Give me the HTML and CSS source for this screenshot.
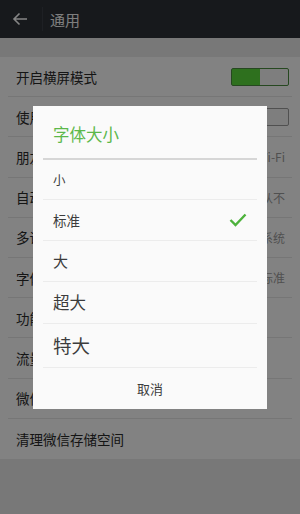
FILE: index.html
```html
<!DOCTYPE html>
<html lang="zh-CN">
<head>
    <meta charset="UTF-8">
    <meta name="viewport" content="width=device-width, initial-scale=1.0">
    <title>通用</title>
    <link rel="stylesheet" href="styles.css">
</head>
<body>
    <header class="topbar">
        <svg class="back" width="16" height="14" viewBox="0 0 16 14">
            <path d="M15 7H2M7.5 1.5L2 7l5.5 5.5" fill="none" stroke="#fff" stroke-width="1.6"/>
        </svg>
        <span class="sep"></span>
        <span class="title">通用</span>
    </header>

    <ul class="settings">
        <li class="row"><span>开启横屏模式</span><span class="switch on"></span></li>
        <li class="row"><span>使用听筒播放语音</span><span class="switch"></span></li>
        <li class="row"><span>朋友圈小视频自动下载</span><span class="value">仅Wi-Fi</span></li>
        <li class="row"><span>自动下载微信安装包</span><span class="value">从不</span></li>
        <li class="row"><span>多语言</span><span class="value">跟随系统</span></li>
        <li class="row"><span>字体大小</span><span class="value">标准</span></li>
        <li class="row"><span>功能</span></li>
        <li class="row"><span>流量统计</span></li>
        <li class="row"><span>微信运动</span></li>
        <li class="row"><span>清理微信存储空间</span></li>
    </ul>

    <div class="mask">
        <div class="dialog">
            <div class="dialog-title">字体大小</div>
            <ul class="options">
                <li class="opt size-s">小</li>
                <li class="opt size-m">标准
                    <svg class="check" width="18" height="14" viewBox="0 0 18 14">
                        <path d="M1.5 7l5 5L16.5 1.5" fill="none" stroke="#4db23c" stroke-width="2.4"/>
                    </svg>
                </li>
                <li class="opt size-l">大</li>
                <li class="opt size-xl">超大</li>
                <li class="opt size-xxl">特大</li>
            </ul>
            <div class="cancel">取消</div>
        </div>
    </div>
</body>
</html>
```

FILE: styles.css
```css
* {
    box-sizing: border-box;
}
body {
    margin: 0;
    height: 514px;
    background-color: #e6e6e6;
    font-family: "Noto Sans CJK SC", "Noto Sans", sans-serif;
    color: #2a2a2a;
}
.topbar {
    height: 38px;
    background-color: #2c3137;
    display: flex;
    align-items: center;
    padding-left: 12px;
}
.back {
    display: block;
}
.sep {
    width: 1px;
    height: 24px;
    background-color: #3a3f45;
    margin-left: 14px;
    margin-right: 7px;
}
.title {
    color: #f2f2f2;
    font-size: 15px;
}
.settings {
    list-style: none;
    margin: 19px 0 0 0;
    padding: 0 8px;
    background-color: #f9f9f9;
}
.row {
    height: 40.2px;
    display: flex;
    align-items: center;
    justify-content: space-between;
    padding: 0 3px 0 8px;
    font-size: 13.5px;
    border-bottom: 1px solid #e3e3e3;
}
.row:last-child {
    border-bottom: none;
}
.value {
    font-size: 12px;
    color: #9a9a9a;
    padding-right: 4px;
}
.switch {
    width: 58px;
    height: 18px;
    border: 1px solid #9a9a9a;
    border-radius: 2px;
    background-color: #f2f2f2;
    position: relative;
}
.switch.on {
    border-color: #4a8a3e;
    background: linear-gradient(to right, #58d73b 50%, #f2f2f2 50%);
}
.mask {
    position: fixed;
    inset: 0;
    background-color: rgba(0, 0, 0, 0.48);
    display: flex;
    align-items: center;
    justify-content: center;
}
.dialog {
    width: 234px;
    background-color: #fafafa;
    padding: 0 10px;
}
.dialog-title {
    height: 54px;
    display: flex;
    align-items: center;
    padding: 4px 0 0 10px;
    color: #5cb84a;
    font-size: 16.5px;
    border-bottom: 2px solid #d6d6d6;
}
.options {
    list-style: none;
    margin: 0;
    padding: 0;
}
.opt {
    display: flex;
    align-items: center;
    justify-content: space-between;
    padding: 0 10px;
    border-bottom: 1px solid #ececec;
    color: #3c3c3c;
}
.size-s {
    height: 40px;
    font-size: 12.5px;
}
.size-m {
    height: 41px;
    font-size: 13.5px;
}
.size-l {
    height: 41px;
    font-size: 15px;
}
.size-xl {
    height: 42px;
    font-size: 16.5px;
}
.size-xxl {
    height: 44px;
    font-size: 18.5px;
}
.check {
    margin-right: 0;
}
.cancel {
    height: 41px;
    display: flex;
    align-items: center;
    justify-content: center;
    font-size: 13px;
    color: #3c3c3c;
}
```
